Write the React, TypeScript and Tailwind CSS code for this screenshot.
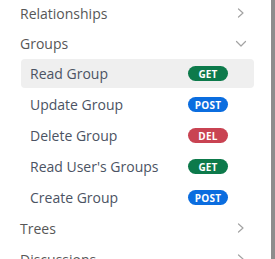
import type { ReactNode } from 'react';

type Method = 'GET' | 'POST' | 'DEL';

interface Endpoint {
  label: string;
  method: Method;
  active?: boolean;
}

const methodStyles: Record<Method, string> = {
  GET: 'bg-[#0d7a4b]',
  POST: 'bg-[#0b6ddf]',
  DEL: 'bg-[#c94352]',
};

const groupEndpoints: Endpoint[] = [
  { label: 'Read Group', method: 'GET', active: true },
  { label: 'Update Group', method: 'POST' },
  { label: 'Delete Group', method: 'DEL' },
  { label: "Read User's Groups", method: 'GET' },
  { label: 'Create Group', method: 'POST' },
];

function ChevronRight() {
  return (
    <svg width="12" height="12" viewBox="0 0 12 12" fill="none">
      <path d="M3.5 2 L8 6 L3.5 10" stroke="#a3a3a3" strokeWidth="1.2" strokeLinecap="round" strokeLinejoin="round" />
    </svg>
  );
}

function ChevronDown() {
  return (
    <svg width="12" height="12" viewBox="0 0 12 12" fill="none">
      <path d="M1.5 3.5 L6 8 L10.5 3.5" stroke="#a3a3a3" strokeWidth="1.2" strokeLinecap="round" strokeLinejoin="round" />
    </svg>
  );
}

function Section({ title, open = false, height }: { title: string; open?: boolean; height: string }) {
  return (
    <div className={`flex items-center justify-between pl-[20px] pr-[24px] ${height}`}>
      <span className="text-[14px] text-[#575757]">{title}</span>
      {open ? <ChevronDown /> : <ChevronRight />}
    </div>
  );
}

function Badge({ method }: { method: Method }): ReactNode {
  return (
    <span
      className={`w-[40px] h-[15px] rounded-full flex items-center justify-center text-[10px] font-bold leading-none tracking-[0.02em] text-white ${methodStyles[method]}`}
    >
      {method}
    </span>
  );
}

export default function App() {
  return (
    <div className="w-[275px] h-[259px] overflow-hidden flex bg-white" style={{ fontFamily: '"Open Sans", "Noto Sans", sans-serif' }}>
      <div className="flex-1 overflow-hidden">
        <div className="mt-[-2px]">
          <Section title="Relationships" height="h-[30px]" />
          <Section title="Groups" open height="h-[31px]" />
          <div className="flex flex-col gap-[2px] ml-[21px] w-[233px]">
            {groupEndpoints.map((ep) => (
              <div
                key={ep.label}
                className={`h-[29px] flex items-center pl-[9px] pr-[26px] rounded-[4px] ${ep.active ? 'bg-[#efefef]' : ''}`}
              >
                <span className="text-[14px] text-[#4b5363]">{ep.label}</span>
                <span className="ml-auto">
                  <Badge method={ep.method} />
                </span>
              </div>
            ))}
          </div>
          <Section title="Trees" height="h-[32px]" />
          <Section title="Discussions" height="h-[30px]" />
        </div>
      </div>
      <div className="w-[4px] bg-[#8d8d8d]" />
    </div>
  );
}
